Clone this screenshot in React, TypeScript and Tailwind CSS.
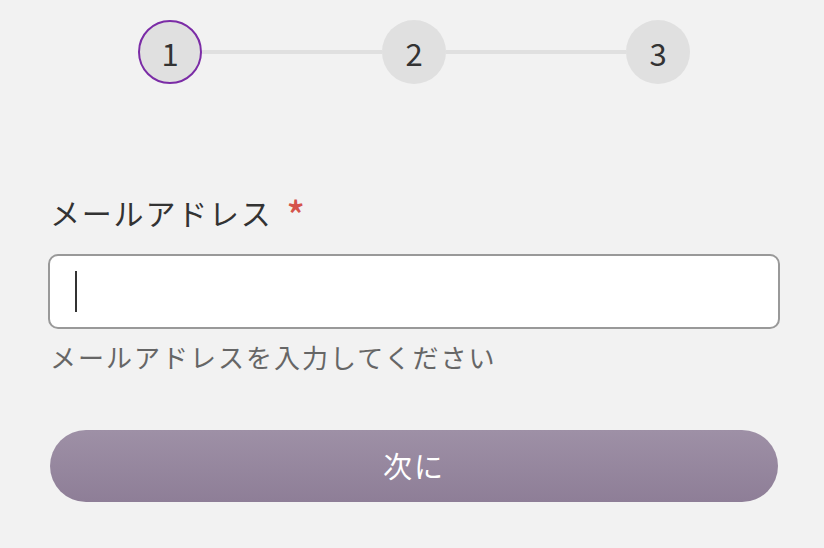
import { useState } from "react"

const font = '"Noto Sans CJK JP", "Noto Sans", sans-serif'

function Step({ n, active }: { n: number; active?: boolean }) {
  return (
    <div
      className={
        "flex h-16 w-16 shrink-0 items-center justify-center rounded-full bg-[#e0e0e0] text-[31px] leading-none text-[#333] " +
        (active ? "border-2 border-[#7b2ca6]" : "")
      }
    >
      {n}
    </div>
  )
}

export default function App() {
  const [email, setEmail] = useState("")

  return (
    <div
      className="h-[548px] w-[824px] overflow-hidden bg-[#f2f2f2]"
      style={{ fontFamily: font }}
    >
      <div className="ml-[138px] flex w-[552px] items-center pt-5">
        <Step n={1} active />
        <div className="h-1 flex-1 bg-[#e0e0e0]" />
        <Step n={2} />
        <div className="h-1 flex-1 bg-[#e0e0e0]" />
        <Step n={3} />
      </div>

      <div className="mt-[111px] ml-[48px] w-[732px]">
        <label className="ml-[2px] flex h-[34px] items-center gap-[14px] text-[30px] leading-[34px] tracking-[1.8px] text-[#333]">
          メールアドレス
          <span className="h-[34px] text-[38px] font-medium leading-[38px] text-[#d5534b]">*</span>
        </label>

        <div className="mt-[25px] flex h-[75px] items-center rounded-[10px] border-2 border-[#999] bg-white pl-[25px] pr-4">
          <span className="h-[41px] w-[2px] bg-[#333]" />
          <input
            type="email"
            value={email}
            onChange={(e) => setEmail(e.target.value)}
            className="h-full flex-1 bg-transparent text-[26px] text-[#333] outline-none"
          />
        </div>

        <p className="mt-[10px] ml-[2px] text-[26px] leading-[36px] tracking-[2px] text-[#666]">
          メールアドレスを入力してください
        </p>

        <button
          type="button"
          className="mt-[55px] ml-[2px] flex h-[72px] w-[728px] items-center justify-center rounded-full bg-gradient-to-b from-[#9e90a6] to-[#8e7e97] text-[29px] tracking-[2px] text-white"
        >
          次に
        </button>
      </div>
    </div>
  )
}
